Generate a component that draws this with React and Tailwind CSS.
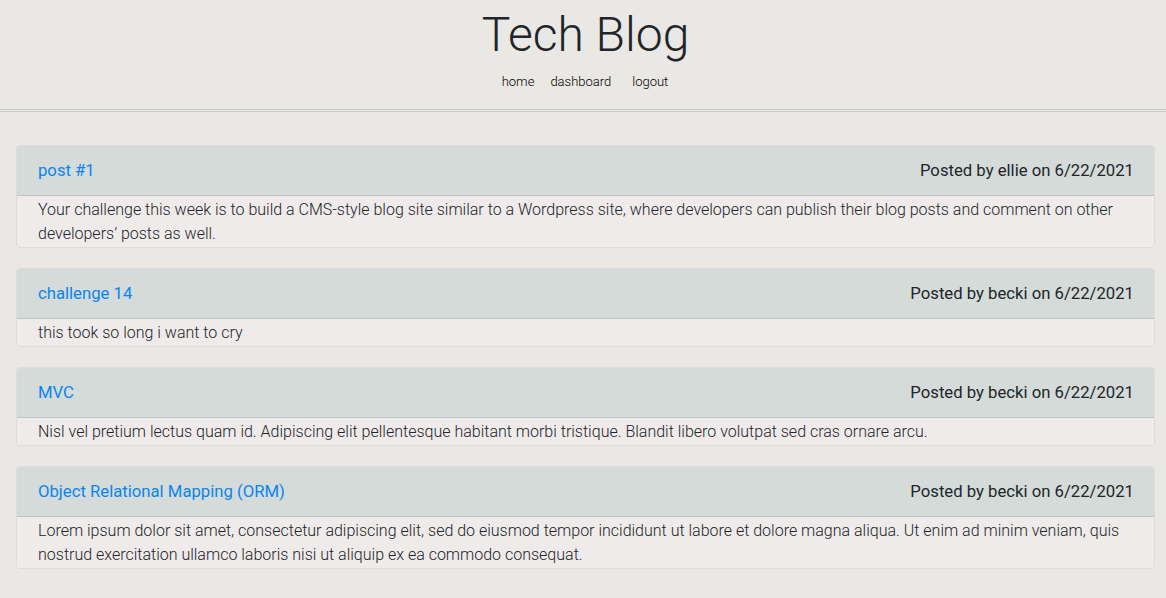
import React from "react";

const posts = [
  {
    title: "post #1",
    author: "ellie",
    date: "6/22/2021",
    body: "Your challenge this week is to build a CMS-style blog site similar to a Wordpress site, where developers can publish their blog posts and comment on other developers’ posts as well.",
  },
  { title: "challenge 14", author: "becki", date: "6/22/2021", body: "this took so long i want to cry" },
  {
    title: "MVC",
    author: "becki",
    date: "6/22/2021",
    body: "Nisl vel pretium lectus quam id. Adipiscing elit pellentesque habitant morbi tristique. Blandit libero volutpat sed cras ornare arcu.",
  },
  {
    title: "Object Relational Mapping (ORM)",
    author: "becki",
    date: "6/22/2021",
    body: "Lorem ipsum dolor sit amet, consectetur adipiscing elit, sed do eiusmod tempor incididunt ut labore et dolore magna aliqua. Ut enim ad minim veniam, quis nostrud exercitation ullamco laboris nisi ut aliquip ex ea commodo consequat.",
  },
];

export default function App() {
  return (
    <div className="min-h-[598px] bg-[#e9e8e4] text-[#212529]" style={{ fontFamily: "Roboto, 'Liberation Sans', sans-serif" }}>
      <header className="flex flex-col items-center pt-[6px] h-[112px] border-b-[3px] border-double border-[#c9c9c5]">
        <h1 className="text-[48px] font-light leading-[58px] text-[#212529] pl-[5px]">Tech Blog</h1>
        <nav className="flex mt-[10px] pl-[4px] text-[13px] font-light text-black leading-[16px]">
          <a className="mr-[16px]">home</a>
          <a className="mr-[21px]">dashboard</a>
          <a>logout</a>
        </nav>
      </header>
      <main className="flex flex-col gap-[20px] pl-[16px] pr-[11px] pt-[33px] pb-[28px]">
        {posts.map((p) => (
          <div key={p.title} className="rounded-[4px] border border-[#dcdcda] overflow-hidden">
            <div className="flex justify-between items-center h-[50px] pl-[21px] pr-[20px] bg-[#d4dbd9] border-b border-[#bec3c3] text-[16.7px]">
              <a className="text-[#0a85f0]">{p.title}</a>
              <span className="text-[#212529]">
                Posted by {p.author} on {p.date}
              </span>
            </div>
            <div className="bg-[#f0ebeb] pl-[21px] pr-[20px] pt-[2px] pb-[1px] text-[16px] leading-[24px] font-light">{p.body}</div>
          </div>
        ))}
      </main>
    </div>
  );
}
